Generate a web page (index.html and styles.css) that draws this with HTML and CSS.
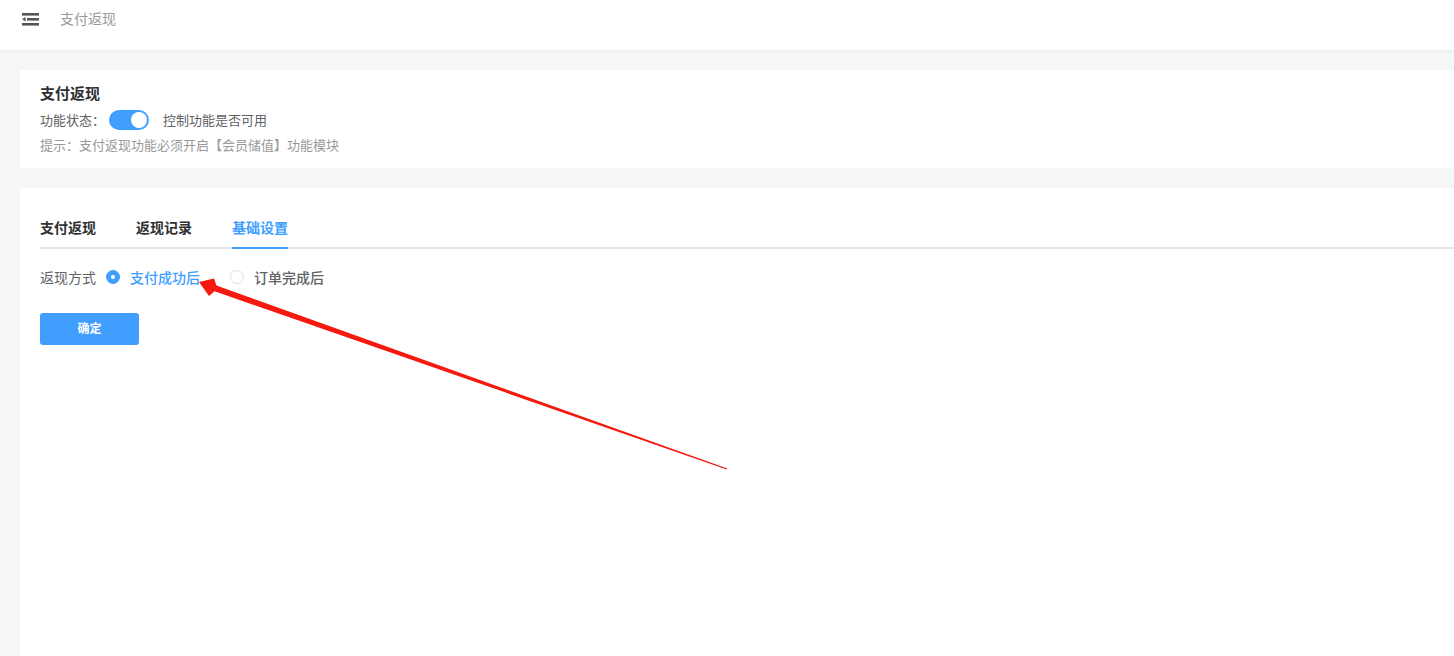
FILE: index.html
```html
<!DOCTYPE html>
<html lang="zh-CN">
<head>
    <meta charset="UTF-8">
    <meta name="viewport" content="width=device-width, initial-scale=1.0">
    <title>支付返现</title>
    <link rel="stylesheet" href="styles.css">
</head>
<body>
    <header class="topbar">
        <span class="fold-icon">
            <svg width="17" height="14" viewBox="0 0 17 14">
                <rect x="0" y="0" width="17" height="2.6" fill="#555"/>
                <rect x="5" y="5" width="12" height="2.6" fill="#555"/>
                <polygon points="0,6.3 3.6,4 3.6,8.6" fill="#555"/>
                <rect x="0" y="10" width="17" height="2.6" fill="#555"/>
            </svg>
        </span>
        <span class="topbar-title">支付返现</span>
    </header>

    <main class="main">
        <section class="card card-info">
            <h2 class="card-title">支付返现</h2>
            <div class="status-row">
                <span class="status-label">功能状态：</span>
                <span class="switch is-on"><span class="switch-knob"></span></span>
                <span class="status-desc">控制功能是否可用</span>
            </div>
            <p class="hint">提示：支付返现功能必须开启【会员储值】功能模块</p>
        </section>

        <section class="card card-body">
            <div class="tabs">
                <div class="tab">支付返现</div>
                <div class="tab">返现记录</div>
                <div class="tab is-active">基础设置</div>
            </div>

            <div class="form-row">
                <span class="form-label">返现方式</span>
                <label class="radio is-checked"><span class="radio-dot"></span>支付成功后</label>
                <label class="radio"><span class="radio-dot"></span>订单完成后</label>
            </div>

            <button class="btn-primary">确定</button>
        </section>
    </main>

    <svg class="arrow" width="1454" height="656" viewBox="0 0 1454 656">
        <polygon points="727.3,468.4 216.5,285.6 214,278.5 199,282 209,296 214.5,291.2 726.7,469.6" fill="#f5190f"/>
    </svg>
</body>
</html>
```

FILE: styles.css
```css
html {
    font-family: "Noto Sans CJK SC", "Noto Sans", sans-serif;
}

body {
    margin: 0;
    background: #f5f6f8;
    color: #303133;
    height: 656px;
    overflow: hidden;
    position: relative;
}

.topbar {
    height: 38px;
    padding-bottom: 12px;
    background: #fff;
    box-shadow: 0 1px 4px rgba(0, 21, 41, 0.06);
    display: flex;
    align-items: center;
    padding-left: 22px;
    position: relative;
    z-index: 1;
}

.fold-icon {
    display: flex;
    margin-top: 1px;
}

.topbar-title {
    margin-left: 21px;
    font-size: 14px;
    color: #999;
    margin-top: -2px;
}

.main {
    padding: 20px 0 0 20px;
}

.card {
    background: #fff;
}

.card-info {
    padding: 13px 20px 13px;
}

.card-title {
    margin: 0;
    font-size: 15px;
    line-height: 20px;
    font-weight: bold;
    color: #303133;
}

.status-row {
    display: flex;
    align-items: center;
    margin-top: 7px;
    height: 20px;
    font-size: 13px;
    color: #606266;
}

.status-label,
.status-desc {
    margin-top: -2px;
}

.switch {
    width: 40px;
    height: 20px;
    border-radius: 10px;
    background: #dcdfe6;
    position: relative;
    margin-left: 4px;
    margin-right: 14px;
}

.switch.is-on {
    background: #409eff;
}

.switch-knob {
    position: absolute;
    top: 2px;
    left: 2px;
    width: 16px;
    height: 16px;
    border-radius: 50%;
    background: #fff;
}

.switch.is-on .switch-knob {
    left: 22px;
}

.hint {
    margin: 5px 0 0;
    font-size: 13px;
    line-height: 20px;
    color: #999;
}

.card-body {
    margin-top: 20px;
    height: 468px;
    padding: 19px 0 0 20px;
}

.tabs {
    display: flex;
    height: 40px;
    border-bottom: 2px solid #e4e7ed;
}

.tab {
    padding: 0 20px;
    line-height: 40px;
    height: 40px;
    font-size: 14px;
    font-weight: bold;
    color: #303133;
}

.tab:first-child {
    padding-left: 0;
}

.tab.is-active {
    color: #409eff;
    box-shadow: inset 0 -2px 0 #409eff;
    height: 42px;
    margin: 0 20px;
    padding: 0;
}

.form-row {
    display: flex;
    align-items: center;
    height: 32px;
    margin-top: 12px;
    font-size: 14px;
}

.form-label {
    color: #606266;
    margin-right: 10px;
}

.radio {
    display: flex;
    align-items: center;
    color: #606266;
    font-weight: 500;
    margin-right: 30px;
}

.radio-dot {
    width: 12px;
    height: 12px;
    border: 1px solid #dcdfe6;
    border-radius: 50%;
    background: #fff;
    margin-right: 10px;
    position: relative;
}

.radio.is-checked {
    color: #409eff;
}

.radio.is-checked .radio-dot {
    border-color: #409eff;
    background: #409eff;
}

.radio.is-checked .radio-dot::after {
    content: "";
    position: absolute;
    top: 4px;
    left: 4px;
    width: 4px;
    height: 4px;
    border-radius: 50%;
    background: #fff;
}

.btn-primary {
    display: block;
    margin-top: 20px;
    width: 99px;
    height: 32px;
    padding: 0 0 3px;
    border: none;
    border-radius: 3px;
    background: #409eff;
    color: #fff;
    font-family: inherit;
    font-size: 12px;
    font-weight: bold;
}

.arrow {
    position: absolute;
    top: 0;
    left: 0;
    pointer-events: none;
}
```
